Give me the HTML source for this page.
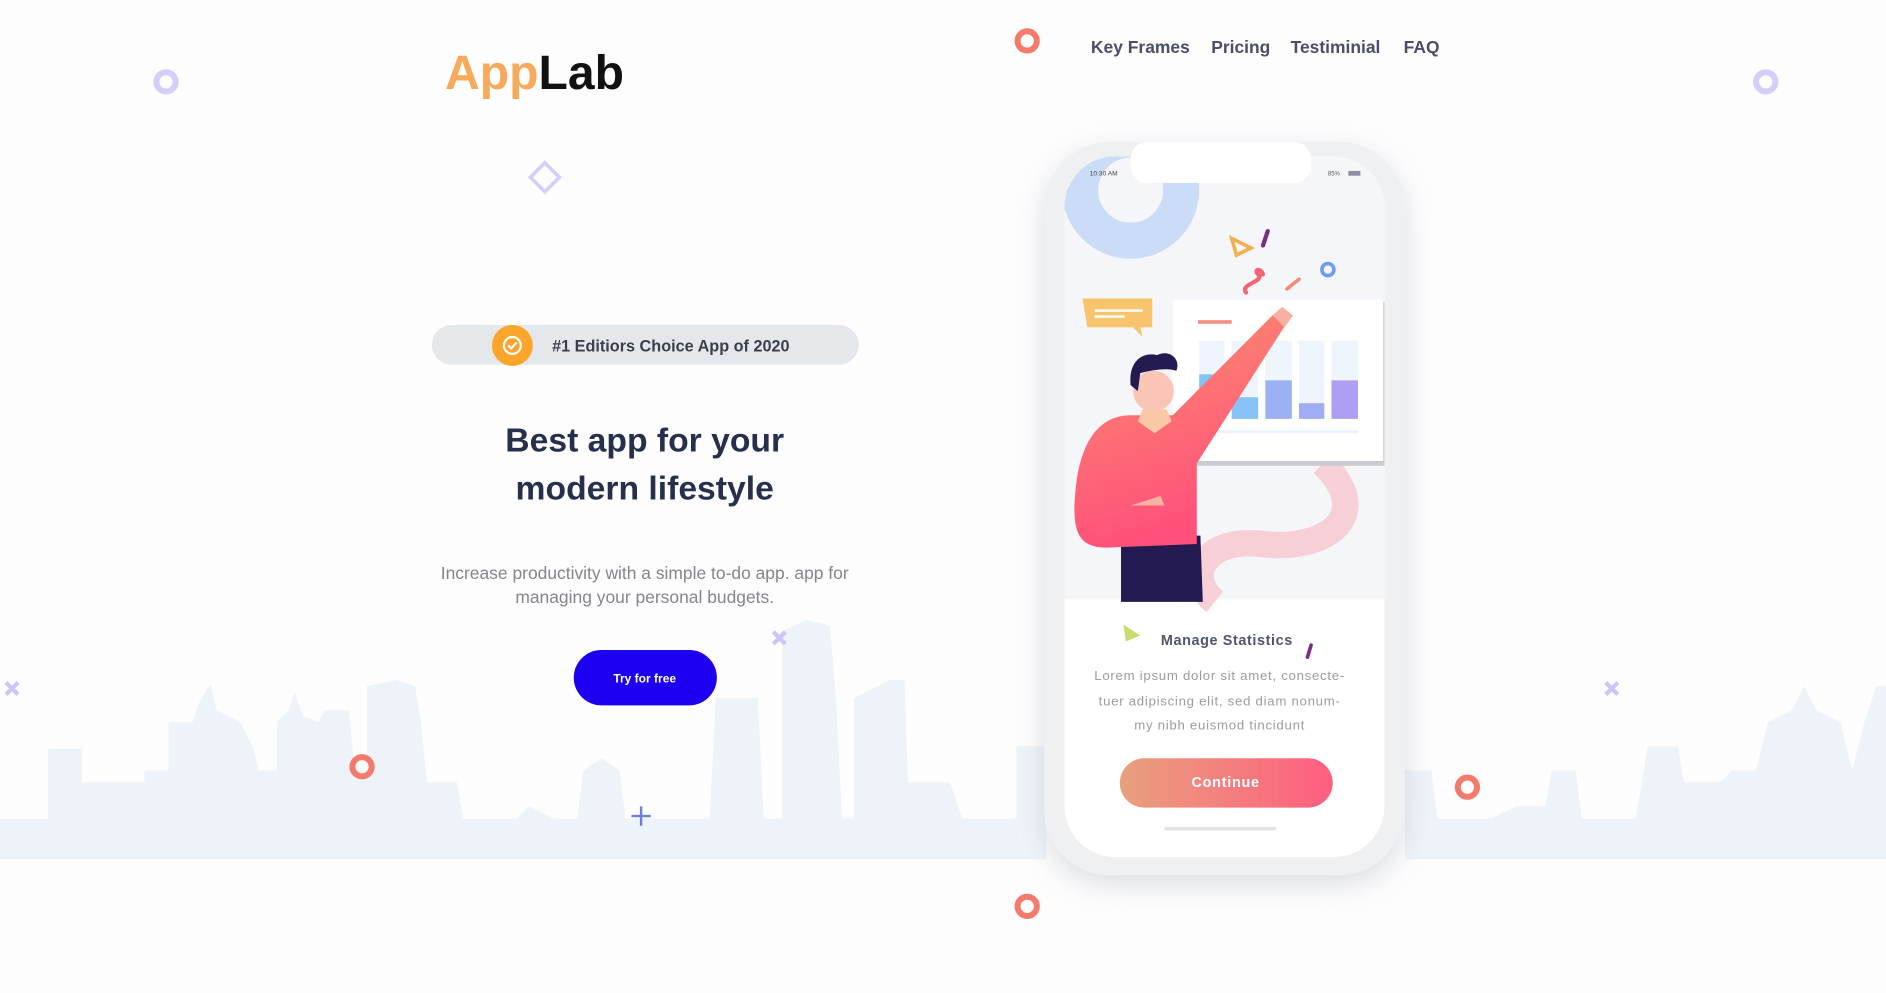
<!DOCTYPE html>
<html><head><meta charset="utf-8"><style>
html,body{margin:0;padding:0;width:1886px;height:993px;overflow:hidden;background:#fdfdfe;}
svg{display:block}
</style></head><body>
<svg width="1886" height="993" viewBox="0 0 1568 825" preserveAspectRatio="none" font-family="Liberation Sans, sans-serif">
<defs>
<linearGradient id="btn" x1="0" x2="1"><stop offset="0" stop-color="#e8a07e"/><stop offset="1" stop-color="#ff5e7f"/></linearGradient>
<linearGradient id="body" x1="0" y1="0" x2="0.3" y2="1"><stop offset="0" stop-color="#fb8f6f"/><stop offset="1" stop-color="#ff4f7b"/></linearGradient>
<filter id="sh" x="-20%" y="-20%" width="140%" height="140%"><feDropShadow dx="0" dy="8" stdDeviation="12" flood-color="#9aa4b0" flood-opacity="0.35"/></filter>
</defs>
<rect width="1568" height="825" fill="#fdfdfe"/>
<polygon fill="#eef3f9" points="0,680 40,680 40,622 68,622 68,650 120,650 120,640 140,640 140,600 160,600 165,585 175,568 180,590 200,600 210,620 215,640 230,640 230,600 240,590 245,575 252,595 265,600 270,590 290,590 295,640 305,640 305,570 330,565 345,570 350,600 355,650 380,650 385,680 430,680 440,670 460,680 480,680 485,640 500,630 515,640 520,680 590,680 595,580 630,580 635,680 650,680 650,525 670,515 690,520 695,580 700,680 710,680 710,580 740,565 752,565 755,650 790,650 800,680 845,680 845,620 870,620 870,714 1168,714 1168,640 1190,640 1195,680 1240,680 1260,670 1285,670 1290,640 1310,640 1315,680 1360,680 1370,620 1395,620 1400,650 1430,650 1440,640 1460,640 1470,600 1490,590 1500,570 1510,590 1530,600 1540,640 1550,600 1560,570 1568,570 1568,714 0,714"/>
<circle cx="138" cy="68" r="8" fill="none" stroke="#d6cdfb" stroke-width="5"/>
<circle cx="1468" cy="68" r="8" fill="none" stroke="#d6cdfb" stroke-width="5"/>
<circle cx="854" cy="34" r="8" fill="none" stroke="#f47a6c" stroke-width="5"/>
<circle cx="301" cy="637" r="8" fill="none" stroke="#f47a6c" stroke-width="5"/>
<circle cx="1220" cy="654" r="8" fill="none" stroke="#f47a6c" stroke-width="5"/>
<circle cx="854" cy="753" r="8" fill="none" stroke="#f47a6c" stroke-width="5"/>
<rect x="444" y="139" width="17" height="17" transform="rotate(45 453 148)" fill="none" stroke="#d6cdfb" stroke-width="3"/>
<g stroke="#cfc4f8" stroke-width="3.5"><path d="M5,567 L15,577 M15,567 L5,577"/><path d="M643,525 L653,535 M653,525 L643,535"/><path d="M1335,567 L1345,577 M1345,567 L1335,577"/></g>
<path d="M533,670 V686 M525,678 H541" stroke="#6a7fe0" stroke-width="2"/>
<text x="370" y="74" font-size="40" font-weight="bold" fill="#f8aa5c">App<tspan fill="#111">Lab</tspan></text>
<g font-size="14.5" font-weight="bold" fill="#4a4e68"><text x="907" y="44">Key Frames</text><text x="1007" y="44">Pricing</text><text x="1073" y="44">Testiminial</text><text x="1167" y="44">FAQ</text></g>
<rect x="359" y="270" width="355" height="33" rx="16.5" fill="#e4e8eb"/>
<circle cx="426" cy="287" r="17" fill="#fba52b"/>
<circle cx="426" cy="287" r="7" fill="none" stroke="#fff" stroke-width="1.8"/>
<path d="M422.5,287 l2.5,2.5 l4.5,-5" fill="none" stroke="#fff" stroke-width="1.8"/>
<text x="459" y="292" font-size="13.5" font-weight="bold" fill="#3c3f4a">#1 Editiors Choice App of 2020</text>
<g font-size="28" font-weight="bold" fill="#262f4b" text-anchor="middle"><text x="536" y="375">Best app for your</text><text x="536" y="415">modern lifestyle</text></g>
<g font-size="14.5" fill="#838590" text-anchor="middle"><text x="536" y="481">Increase productivity with a simple to-do app. app for</text><text x="536" y="501">managing your personal budgets.</text></g>
<rect x="477" y="540" width="119" height="46" rx="23" fill="#1e00f0"/>
<text x="536" y="567" font-size="10" font-weight="bold" fill="#fff" text-anchor="middle">Try for free</text>
<rect x="868" y="118" width="300" height="609" rx="55" fill="#f3f5f6" filter="url(#sh)"/>
<rect x="868" y="118" width="300" height="609" rx="55" fill="#eef0f1"/>
<rect x="885" y="130" width="266" height="582" rx="42" fill="#fff"/>
<clipPath id="scr"><rect x="885" y="130" width="266" height="582" rx="42"/></clipPath>
<g clip-path="url(#scr)">
<rect x="885" y="130" width="266" height="368" fill="#f5f6f9"/>
<circle cx="940" cy="158" r="42" fill="none" stroke="#cbdcf7" stroke-width="30"/>
<path d="M1100,385 C1145,430 1100,458 1050,452 C1000,446 985,480 1010,500" fill="none" stroke="#f6cfd7" stroke-width="22"/>
<rect x="977" y="251" width="175" height="136" fill="#c9cbd0"/>
<rect x="975" y="249" width="175" height="134" fill="#fff"/>
<rect x="996" y="266" width="28" height="3" fill="#f6907e"/>
<g fill="#eff5fd"><rect x="997" y="283" width="21" height="65"/><rect x="1024" y="283" width="22" height="65"/><rect x="1052" y="283" width="22" height="65"/><rect x="1080" y="283" width="21" height="65"/><rect x="1107" y="283" width="22" height="65"/></g>
<rect x="997" y="311" width="21" height="37" fill="#80c3f6"/><rect x="1024" y="330" width="22" height="18" fill="#88c3f7"/><rect x="1052" y="316" width="22" height="32" fill="#9ab2f5"/><rect x="1080" y="335" width="21" height="13" fill="#a1adf3"/><rect x="1107" y="316" width="22" height="32" fill="#ae9ff4"/>
<rect x="997" y="357" width="132" height="3" fill="#eef3fb"/>
<path d="M900,248 H958 V272 H948 L950,280 L942,272 H904 Z" fill="#f8c46d"/>
<path d="M910,258 H950 M910,263 H935" stroke="#fff" stroke-width="2"/>
<path d="M1024,198 L1040,206 L1028,212 Z" fill="none" stroke="#f2b04f" stroke-width="3"/>
<path d="M1054,192 L1050,204" stroke="#7a2c87" stroke-width="3.5" stroke-linecap="round"/>
<path d="M1036,243 C1030,236 1052,234 1046,228 C1042,224 1048,222 1050,228" fill="none" stroke="#f26477" stroke-width="3.5" stroke-linecap="round"/>
<path d="M1070,240 L1080,232" stroke="#f58a72" stroke-width="3" stroke-linecap="round"/>
<circle cx="1104" cy="224" r="5" fill="none" stroke="#6f9cf3" stroke-width="3"/>
<path d="M932,445 H998 L1000,500 H932 Z" fill="#241a52"/>
<path d="M940,345 C915,345 900,365 895,400 C890,440 895,455 920,455 L995,452 L995,385 L1070,268 L1058,262 L975,345 Z" fill="url(#body)"/>
<path d="M1058,262 L1066,255 L1075,262 L1068,272 Z" fill="#f8b1a0"/>
<path d="M946,350 L960,360 L974,350 L970,340 L950,340 Z" fill="#f9c8a7"/>
<circle cx="959" cy="325" r="17" fill="#f9c5b5"/>
<path d="M940,320 C938,300 950,292 962,295 C972,290 982,298 978,308 C970,305 955,308 948,310 L946,325 Z" fill="#241a52"/>
<path d="M940,420 L965,412 L968,420 Z" fill="#f9b3a2"/>
</g>
<rect x="940" y="118" width="150" height="34" rx="14" fill="#fff"/>
<text x="906" y="146" font-size="5.5" fill="#444">10:30 AM</text>
<text x="1104" y="146" font-size="5" fill="#555">85%</text>
<rect x="1121" y="142" width="10" height="4" fill="#8d8fa3"/>
<path d="M934,519 L948,528 L936,533 Z" fill="#c8dd6e"/>
<path d="M1090,536 L1087,546" stroke="#7a2c87" stroke-width="3" stroke-linecap="round"/>
<text x="1020" y="536" font-size="12" font-weight="bold" fill="#51566c" text-anchor="middle" letter-spacing="0.5">Manage Statistics</text>
<g font-size="11" fill="#9a9ca4" text-anchor="middle" letter-spacing="0.6"><text x="1014" y="565">Lorem ipsum dolor sit amet, consecte-</text><text x="1014" y="586">tuer adipiscing elit, sed diam nonum-</text><text x="1014" y="606">my nibh euismod tincidunt</text></g>
<rect x="931" y="630" width="177" height="41" rx="20.5" fill="url(#btn)"/>
<text x="1019" y="654" font-size="12" font-weight="bold" fill="#fff" text-anchor="middle" letter-spacing="0.6">Continue</text>
<rect x="968" y="687" width="93" height="3" rx="1.5" fill="#e0e4e6"/>
</svg>
</body></html>
